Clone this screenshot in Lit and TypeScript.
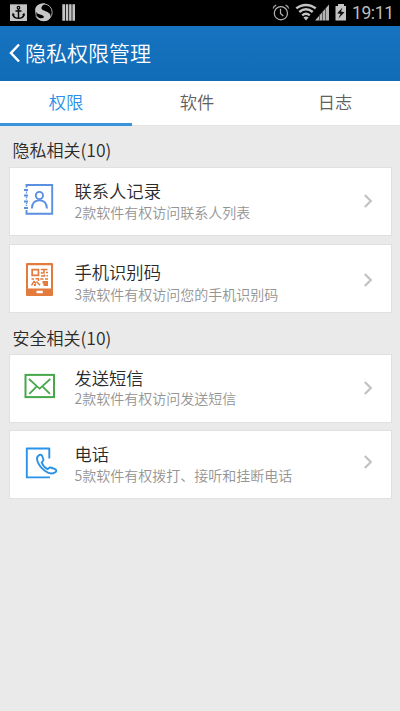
import { LitElement, html, css, svg, TemplateResult } from "lit";
import { customElement, property } from "lit/decorators.js";

const FONT = css`"Noto Sans CJK SC DemiLight", "Noto Sans CJK SC", sans-serif`;

const contactsIcon = svg`<svg width="34" height="36" viewBox="0 0 34 36" fill="none" stroke="#5b8fe0" stroke-width="1.9">
  <path d="M3.500 6.500V4H29.200V32.800H3.500V29"/>
  <path d="M3.500 9V12.500M3.500 15.500V18.500M3.500 21.700V25" stroke-width="1.400" stroke-dasharray="1.500 .8"/>
  <path d="M1 9H5M1 14.500H5M1 20.500H5M1 27H5" stroke-width="1.800"/>
  <circle cx="16.400" cy="14.500" r="3.600"/>
  <path d="M8.900 27.500C9.100 22 12 19.400 16.400 19.400S23.700 22 23.900 27.500"/>
</svg>`;

const codeIcon = svg`<svg width="34" height="36" viewBox="0 0 34 36">
  <path fill="#e27b3c" fill-rule="evenodd" d="M4 1H29Q30 1 30 2V33Q30 34 29 34H4Q3 34 3 33V2Q3 1 4 1ZM5 3.300V26.400H28V3.300ZM13.500 28.800V31.300H19.800V28.800Z"/>
  <path fill="#e27b3c" fill-rule="evenodd" d="M8.300 6.800H16.300V14.200H8.300ZM10 8.500V12.500H14.600V8.500Z"/>
  <path fill="none" stroke="#e27b3c" stroke-width="1.500" d="M17.800 7.600H24.500M21 7.600V11.500M17.800 11H20.500M23 10.500H25M18 14H21.500V12.500M23.500 13.800H25M8.500 17H11M12.500 16.800H15.500V19M8.500 23.300L11 19.500L13 21.500M13.500 19.500L17 23.300M17.200 17H20.500M22 17H25"/>
  <path fill="#e27b3c" d="M19.500 19H25V24H20.500V21.500H19.500ZM11 22H13V24H11Z"/>
</svg>`;

const mailIcon = svg`<svg width="34" height="36" viewBox="0 0 34 36" fill="none" stroke="#46a84b" stroke-width="2">
  <rect x="2.500" y="6.900" width="28.500" height="22.200"/>
  <path d="M6 11L14.600 18.900L16.600 20.600L18.600 18.900L27.300 11M6.300 25.800L13.300 18.900M27 25.800L19.900 18.900" stroke-width="1.800"/>
</svg>`;

const phoneIcon = svg`<svg width="36" height="36" viewBox="0 0 36 36" fill="none" stroke="#2b92ea" stroke-width="1.900" stroke-linejoin="round">
  <path d="M26.300 13.500V3.500H3.800V32.400H27"/>
  <path transform="translate(0 1.500)" d="M15.300 9.200C17.100 7.600 18.700 8.100 19.300 9.800L20.400 13C20.800 14.300 19.300 15 18.700 16C19.600 18.500 21.800 21.300 24.600 22.600C25.600 22 26.200 20.600 27.600 21L32.100 22.700C34 23.700 33.500 25.300 31.700 26.100C28.800 27.600 25.200 26.700 22.200 24.500C18.500 21.800 15.600 18.300 14.400 14.500C13.700 12.200 13.800 10.400 15.300 9.200Z"/>
</svg>`;

@customElement("status-bar")
class StatusBar extends LitElement {
  static styles = css`
    :host { display: flex; height: 26px; box-sizing: border-box; background: #000; color: #c9c9c9; justify-content: space-between; }
    svg { display: block; flex: none; }
    .right { display: flex; }
    .time { font: 400 17.500px/27px Roboto, sans-serif; width: 49px; margin-left: -1px; padding-left: 1px; box-sizing: border-box; letter-spacing: -0.400px; color: #bdbdbd; }
  `;
  render() {
    return html`
      <svg width="90" height="26" viewBox="0 0 90 26">
        <rect x="10" y="4.300" width="17" height="16.700" fill="#c4c4c4"/>
        <g fill="none" stroke="#080808" stroke-width="1.500">
          <circle cx="18.500" cy="7.700" r="1.300" stroke-width="1.200"/>
          <path d="M18.500 9V18.500M15.500 11H21.500M13 14.300C13.500 17 15.500 18.300 18.500 18.300S23.500 17 24 14.300"/>
        </g>
        <path fill="#080808" d="M11.900 15.800L12.800 12.800L15 15ZM25.100 15.800L24.200 12.800L22 15Z"/>
        <circle cx="43.900" cy="12.300" r="8.300" fill="none" stroke="#aaa" stroke-width="1"/>
        <path fill="#c8c8c8" d="M45.500 3.300C39 2.800 35 6.300 35.200 10C35.400 13.300 39.200 14.100 41.800 15C44.500 16 44.600 18 42 18.300C39.500 18.500 37.300 17.400 35.300 15.500C36.500 18.900 40 21.300 44 21.200C48.500 21 51 18.400 50.500 15.500C50 12.500 46.500 11.800 43.300 10.300C40.500 9 40.500 6.500 45.500 3.300Z"/>
        <path fill="#c4c4c4" d="M62.300 4.300H65V20.700H62.300ZM65.800 4.300H68.300V20.700H65.800ZM69.100 4.300H71.600V20.700H69.100ZM72.400 4.300H75V20.700H72.400Z"/>
      </svg>
      <div class="right">
        <svg width="81" height="26" viewBox="0 0 81 26">
          <g fill="none" stroke="#b4b4b4" stroke-width="1.200">
            <circle cx="9.900" cy="13.200" r="6.600"/>
            <path d="M9.500 8.800V13.400L12.300 16M2.200 8.500C2.500 6.700 3.500 5.700 5.200 5.200M17.600 8.500C17.300 6.700 16.300 5.700 14.600 5.200"/>
          </g>
          <g fill="none" stroke="#c4c4c4" stroke-width="2.500">
            <path d="M25.300 8.400C31 3.700 39 3.700 44.700 8.400M28.300 12C32.500 8.600 37.500 8.600 41.700 12M31.200 15.400C33.500 13.500 36.500 13.500 38.800 15.400"/>
          </g>
          <path fill="#c4c4c4" d="M32.400 17.400Q35 15.600 37.600 17.400L35 20.500Z"/>
          <path fill="#b4b4b4" d="M44 20.500L58 4.500V20.500Z"/>
          <path stroke="#333" stroke-width=".7" d="M48.500 14V21M51.500 11V21M54.500 8V21"/>
          <path fill="#c4c4c4" d="M67 4H73V6H75V20.500H64.500V6H67Z"/>
          <path fill="#111" d="M71.500 7.500L66.200 13.300L69.500 14L67.200 18.800L73.500 12.300L70 11.500Z"/>
        </svg>
        <div class="time">19:11</div>
      </div>`;
  }
}

@customElement("permission-card")
class PermissionCard extends LitElement {
  @property() heading = "";
  @property() detail = "";
  @property({ attribute: false }) icon?: TemplateResult | unknown;

  static styles = css`
    :host { display: flex; flex: none; box-sizing: border-box; height: 69px; margin: 0 8px 0 9px; padding: 0 18px 0 13px; background: #fff; border: 1px solid #e0e0e0; font-family: ${FONT}; }
    svg { display: block; flex: none; }
    .icon { width: 34px; margin-top: var(--icon-top, 14px); }
    .text { flex: 1; margin: var(--text-top, 12px) 0 0 17.500px; white-space: nowrap; }
    .heading { font-size: 17.300px; line-height: 22px; color: #2a2a2a; font-weight: 350; }
    .detail { font-size: 14px; line-height: 18px; color: #949494; font-weight: 350; margin-top: var(--detail-gap, 1px); }
    .arrow { margin-top: var(--arrow-top, 26px); }
  `;
  render() {
    return html`
      <div class="icon">${this.icon}</div>
      <div class="text">
        <div class="heading">${this.heading}</div>
        <div class="detail">${this.detail}</div>
      </div>
      <svg class="arrow" width="10" height="14" viewBox="0 0 10 14" fill="none" stroke="#c2c2c2" stroke-width="2.200"><path d="M1.800 1L7.800 7L1.800 13"/></svg>`;
  }
}

@customElement("app-root")
class AppRoot extends LitElement {
  static styles = css`
    :host { display: flex; flex-direction: column; height: 711px; background: #eaeaea; font-family: ${FONT}; overflow: hidden; }
    .header { display: flex; align-items: center; height: 55px; box-sizing: border-box; padding: 0 0 2px 9px; background: linear-gradient(#1673c0, #116cb6); color: #fff; font-size: 21px; line-height: 53px; font-weight: 350; }
    .header svg { display: block; margin-right: 4px; }
    .tabs { display: grid; grid-template-columns: 132px 130px 1fr; height: 44px; background: #fff; border-bottom: 1px solid #e3e3e3; font-size: 17.300px; line-height: 41px; font-weight: 350; color: #606060; text-align: center; }
    .tab { box-sizing: border-box; border-bottom: 3px solid transparent; }
    .tab.active { color: #2b90e6; border-bottom-color: #3a94dc; height: 45px; }
    .tab.last { padding-left: 8px; }
    .section { display: flex; font-size: 17px; font-weight: 350; color: #2a2a2a; padding-left: 12.500px; line-height: 24px; height: 24px; }
    .count { font-size: 17.500px; line-height: 23px; }
    .first { margin: 12px 0 5px; }
    .second { margin: 13px 0 4px; }
    .gap { margin-top: 8px; }
    .contacts { --icon-top: 13px; --text-top: 12px; }
    .code { --icon-top: 17px; --text-top: 16px; --arrow-top: 28px; --detail-gap: 2px; }
    .sms { --icon-top: 13px; --text-top: 12px; --arrow-top: 26px; --detail-gap: 0px; }
    .phone { margin-top: 7px; --icon-top: 14px; --text-top: 12px; --arrow-top: 24px; }
  `;
  render() {
    return html`
      <status-bar></status-bar>
      <div class="header">
        <svg width="12" height="20" viewBox="0 0 12 20" fill="none" stroke="#fff" stroke-width="2.500"><path d="M10 1.500L2 10L10 18.500"/></svg>
        <span>隐私权限管理</span>
      </div>
      <div class="tabs">
        <div class="tab active">权限</div>
        <div class="tab">软件</div>
        <div class="tab last">日志</div>
      </div>
      <div class="section first">隐私相关<span class="count">(10)</span></div>
      <permission-card class="contacts" heading="联系人记录" detail="2款软件有权访问联系人列表" .icon=${contactsIcon}></permission-card>
      <permission-card class="code gap" heading="手机识别码" detail="3款软件有权访问您的手机识别码" .icon=${codeIcon}></permission-card>
      <div class="section second">安全相关<span class="count">(10)</span></div>
      <permission-card class="sms" heading="发送短信" detail="2款软件有权访问发送短信" .icon=${mailIcon}></permission-card>
      <permission-card class="phone" heading="电话" detail="5款软件有权拨打、接听和挂断电话" .icon=${phoneIcon}></permission-card>`;
  }
}
